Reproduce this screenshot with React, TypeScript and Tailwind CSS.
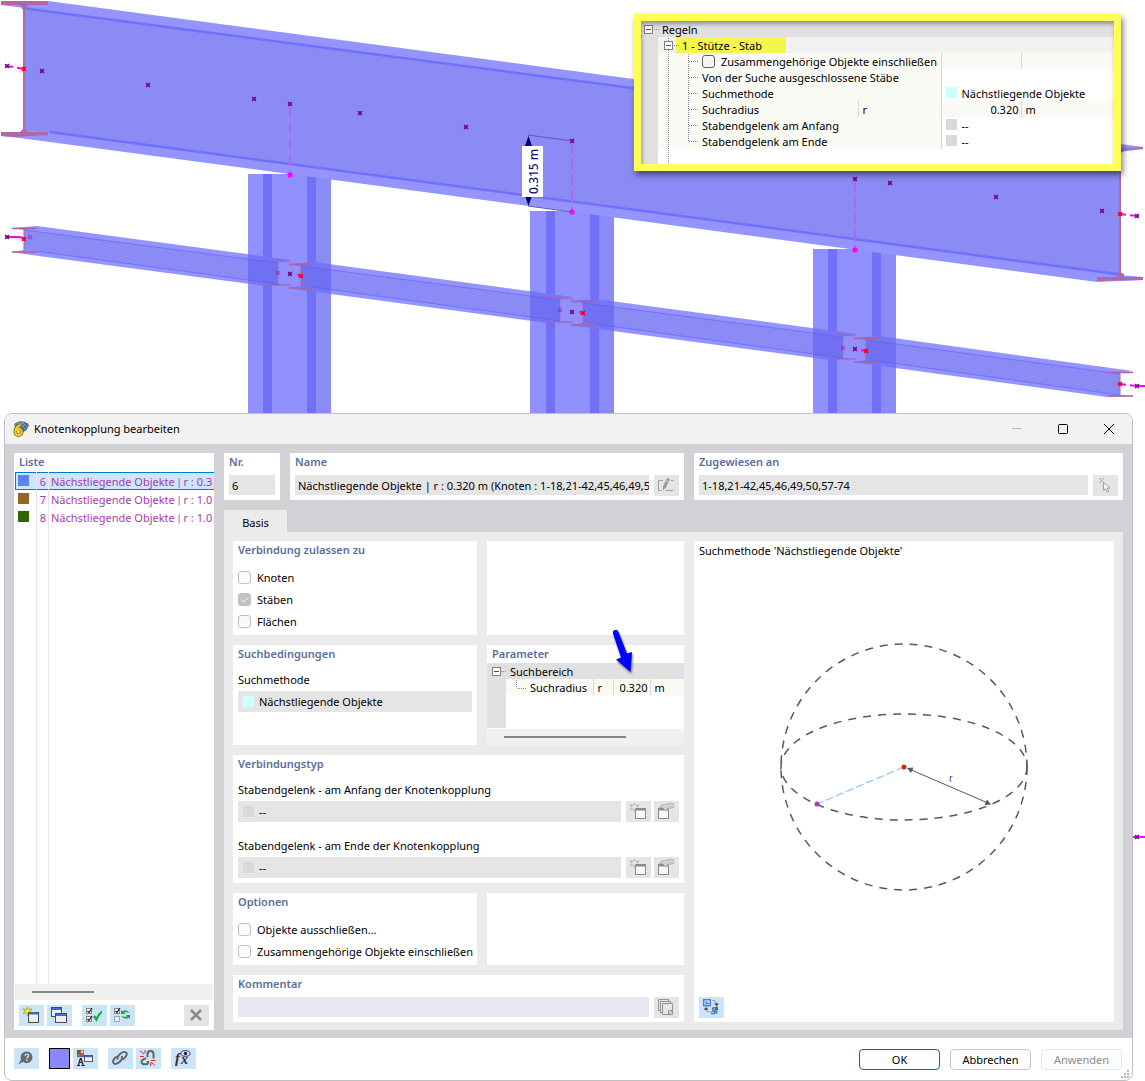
import type { ReactNode } from "react";
import { useState } from "react";

/* ---------- model view behind the dialog ---------- */

const PURLINS = [
  [24, 228, 278, 261],
  [301, 264, 560, 298],
  [583, 301, 843, 335],
  [866, 338, 1120, 372],
];

const COLUMNS = [
  { x: 248, y: 174, w: 83, a: 263, b: 307 },
  { x: 530, y: 211, w: 84, a: 546, b: 590 },
  { x: 813, y: 249, w: 83, a: 828, b: 872 },
];

function purlinPoints([x1, y1, x2, y2]: number[]) {
  return [
    [x1 - 12, y1],
    [x1 + 13, y1 - 2],
    [x2 + 13, y2 - 1],
    [x2, y2 + 1],
    [x2, y2 + 23],
    [x2 + 13, y2 + 24],
    [x2 - 13, y2 + 25],
    [x1, y1 + 26],
    [x1 - 12, y1 + 24],
    [x1, y1 + 22],
    [x1, y1 + 2],
  ]
    .map((p) => p.join(","))
    .join(" ");
}

function PurlinEnd({ x, y, faded }: { x: number; y: number; faded?: boolean }) {
  return (
    <g stroke="#b060a0" opacity={faded ? 0.6 : 1}>
      <path d={`M${x - 12} ${y + 0.5}H${x + 13}M${x - 12} ${y + 24}H${x + 13}`} strokeWidth="1.5" />
      <path d={`M${x} ${y}V${y + 24}`} strokeWidth="1" />
    </g>
  );
}

function Node({ x, y, color = "#7a0080", faded }: { x: number; y: number; color?: string; faded?: boolean }) {
  return (
    <g opacity={faded ? 0.4 : 1}>
      <rect x={x - 2} y={y - 2} width="4" height="4" fill={color} opacity="0.5" />
      <path d={`M${x - 2} ${y - 2}l4 4m0 -4l-4 4`} stroke={color} strokeWidth="1.1" />
    </g>
  );
}

const MEMBER_NODES = [
  [7, 66], [42, 71], [148, 85], [254, 99], [290, 104], [360, 113], [466, 127], [572, 141],
  [855, 179], [890, 183], [996, 197], [1102, 211], [1137, 216], [7, 237], [290, 274],
  [572, 312], [855, 349], [1137, 386], [1137, 837],
];
const HINGE_NODES = [[24, 69], [1120, 214], [24, 239], [301, 276], [583, 313], [866, 351], [1120, 384]];
const FADED_NODES = [[30, 237], [278, 273], [560, 310], [843, 348]];

function ModelView() {
  return (
    <svg className="absolute left-0 top-0 w-full" viewBox="0 0 1145 1081" aria-label="Modellansicht" fill="none">
      <defs>
        <clipPath id="purlin-clip">
          {PURLINS.map((p) => (
            <polygon key={p[0]} points={purlinPoints(p)} />
          ))}
        </clipPath>
      </defs>

      {COLUMNS.map((c) => (
        <g key={c.x}>
          <rect x={c.x} y={c.y} width={c.w} height="260" fill="#9191fd" />
          <rect x={c.b + 9} y={c.y} width={c.x + c.w - c.b - 9} height="260" fill="#8b8bf8" />
          <rect x={c.a} y={c.y} width="9" height="260" fill="#7070f8" />
          <rect x={c.b} y={c.y} width="9" height="260" fill="#7070f8" />
        </g>
      ))}

      <polygon points="48,1 1143,147 1143,149 1120,152 1120,275 1143,277 1143,280 1097,282 12,137 1,136 24,131 24,8 1,5" fill="#9494ff" />
      <polygon points="24,8 1120,152 1120,275 50,132 24,130" fill="#8b8bf6" />
      <path d="M22 8L1120 152M50 132L1124 275" stroke="#7070fc" strokeWidth="2.500" />

      {PURLINS.map((p) => (
        <g key={p[0]}>
          <polygon points={purlinPoints(p)} fill="#9494ff" />
          <polygon points={`${p[0]},${p[1] + 2} ${p[2]},${p[3] + 2} ${p[2]},${p[3] + 23} ${p[0]},${p[1] + 22}`} fill="#8b8bf6" />
          <path d={`M${p[0]} ${p[1] + 2}L${p[2]} ${p[3] + 2}M${p[0] + 12} ${p[1] + 23}L${p[2]} ${p[3] + 23}`} stroke="#7070fc" />
        </g>
      ))}
      <g clipPath="url(#purlin-clip)" fill="#5656ee" fillOpacity="0.5">
        {COLUMNS.map((c) => (
          <rect key={c.x} x={c.x} y="174" width={c.w} height="240" />
        ))}
      </g>
      {PURLINS.map((p, i) => (
        <g key={p[0]}>
          <PurlinEnd x={p[0]} y={p[1]} />
          <PurlinEnd x={p[2]} y={p[3]} faded={i < 3} />
        </g>
      ))}

      <path d="M1 1H48V5H28L25 8V129L28 132H48V135L14 137L1 136V132H20L23 129V8L20 5H1Z" fill="#b266a5" />
      <path d="M1121 149L1143 147V149L1124 150L1121 153V272L1124 277H1143V280L1097 281V277H1116L1119 272V152Z" fill="#b266a5" />

      <path d="M290 106V173M572 143V210M855 181V248" stroke="#ae66f4" strokeWidth="2" strokeDasharray="12 4" />
      <path
        d="M7 66L24 69M1120 214L1137 216M1120 384L1137 386M297 275L301 276M579 312L583 313M861 350L866 351"
        stroke="#ff00ff"
        strokeWidth="2"
        strokeDasharray="6 4"
      />
      <path d="M7 237H20L24 239M1137 386H1145M1132 837H1145" stroke="#ff00ff" strokeWidth="2" />
      {[[290, 175], [572, 212], [855, 250]].map(([x, y]) => (
        <rect key={x} x={x - 2.5} y={y - 2.5} width="5" height="5" rx="1.5" fill="#ff00ff" />
      ))}
      {MEMBER_NODES.map(([x, y]) => <Node key={`${x}-${y}`} x={x} y={y} />)}
      {HINGE_NODES.map(([x, y]) => <Node key={`${x}-${y}`} x={x} y={y} color="#ff0000" />)}
      {FADED_NODES.map(([x, y]) => <Node key={`${x}-${y}`} x={x} y={y} color="#a00060" faded />)}

      <path d="M528 135L572 141M528 206L572 212" stroke="#5a5ab8" />
      <path d="M528.500 136L532 146H525ZM528.500 206L532 196H525Z" fill="#000080" />
      <rect x="522" y="146" width="21" height="51" fill="#fff" />
      <text x="0" y="0" transform="translate(538 194) rotate(-90)" fill="#101070" fontSize="12" fontWeight="500" fontFamily="Noto Sans, sans-serif">
        0.315 m
      </text>
    </svg>
  );
}

/* ---------- icons ---------- */

const svgBox = "h-4 w-4";

function NewWindowIcon({ muted }: { muted?: boolean }) {
  return (
    <svg viewBox="0 0 16 16" className={svgBox} fill="none">
      <path d="M4.500 0L5.600 2.600L9 2L7 4.200L9 6.500L6 6L4.800 9L3.500 6L0 6.500L2.200 4.200L0 2L3.400 2.600Z" fill={muted ? "#ececec" : "#fff000"} stroke={muted ? "#a0a0a0" : "#8f8f2a"} strokeWidth=".7" />
      <rect x="5.500" y="5.500" width="10" height="10" fill={muted ? "#fafafa" : "#eeeef2"} stroke={muted ? "#8c8c8c" : "#4a4a4a"} />
      <path d="M6 6.500H15" stroke={muted ? "#8c8c8c" : "#4468d8"} strokeWidth="2" />
    </svg>
  );
}
function CopyWindowIcon() {
  return (
    <svg viewBox="0 0 16 16" className={svgBox} fill="#eeeef2" stroke="#4a4a4a">
      <rect x=".5" y=".5" width="10" height="9" />
      <path d="M1 2H10" stroke="#4468d8" strokeWidth="2" />
      <rect x="4.500" y="6.500" width="11" height="9" />
      <path d="M5 8H15" stroke="#4468d8" strokeWidth="2" />
    </svg>
  );
}
function CheckListIcon({ swap }: { swap?: boolean }) {
  return (
    <svg viewBox="0 0 16 16" className={svgBox} fill="none">
      <rect x=".5" y="1.500" width="5" height="5" fill="#fff" stroke="#888" />
      <rect x=".5" y="9.500" width="5" height="5" fill={swap ? "#e4f0fa" : "#fff"} stroke={swap ? "#9aa8b4" : "#888"} />
      <path d="M1.500 4l1.500 1.500L6 1" stroke="#222" strokeWidth="1.200" />
      {!swap && <path d="M1.500 12l1.500 1.500L6 9" stroke="#222" strokeWidth="1.200" />}
      {swap ? (
        <g fill="#2fa04a">
          <path d="M7 7V3L8.300 4.200C10.500 2.500 14 3 15.500 6C13.500 5 11.500 5 10 5.800L11.200 7Z" />
          <path d="M16 8V12L14.700 10.800C12.500 12.500 9 12 7.500 9C9.500 10 11.500 10 13 9.200L11.800 8Z" />
        </g>
      ) : (
        <path d="M8 9L10.500 12.500C11.500 9.500 13 7 16 4.500" stroke="#10a848" strokeWidth="2.200" />
      )}
    </svg>
  );
}
function CrossIcon() {
  return (
    <svg viewBox="0 0 16 16" className={svgBox}>
      <path d="M3 3L13 13M13 3L3 13" stroke="#8a8a8a" strokeWidth="2.600" />
    </svg>
  );
}
function EditIcon() {
  return (
    <svg viewBox="0 0 16 16" className={svgBox} fill="none">
      <path d="M5 3.500H.5V13.500H3.500M8 13.500H15.500M13 3.500H15.500" stroke="#a0a0a0" />
      <path d="M9 1L12 2.200L8 10.500L5 13.500V9.500Z" fill="#9c9c9c" />
      <path d="M8 3.500L11 4.800" stroke="#e5e5e5" strokeWidth=".7" />
    </svg>
  );
}
function PickIcon() {
  return (
    <svg viewBox="0 0 16 16" className={svgBox} fill="none">
      <path d="M2 1l5 5M7 1L2 6" stroke="#a0a0a0" />
      <path d="M6.500 5.500v8l2-1.800 1.500 3.300 1.800-.8-1.500-3.200H13z" fill="#f4f4f4" stroke="#9a9a9a" strokeWidth=".9" />
    </svg>
  );
}
function EditWindowIcon() {
  return (
    <svg viewBox="0 0 16 16" className={svgBox} fill="none">
      <rect x=".5" y="5.500" width="10" height="10" fill="#fafafa" stroke="#8c8c8c" />
      <path d="M1 6.500H10" stroke="#8c8c8c" strokeWidth="2" />
      <path d="M1 4.500C3 1.500 6 1.500 8 1.200L11 0.500H15.500V5H12.500L9.500 5.500L8 8.500L6 6L4 4.500Z" fill="#c6c6c6" stroke="#a8a8a8" strokeWidth=".6" />
      <path d="M5 3.500L9 3M7 6L8 4.500M11 1.500V4.500M13 2.500H15" stroke="#ededed" />
    </svg>
  );
}
function PagesIcon() {
  return (
    <svg viewBox="0 0 16 16" className={svgBox} fill="#e6e6e6" stroke="#959595">
      <rect x=".5" y=".5" width="10" height="11" />
      <rect x="2.500" y="2.500" width="10" height="11" />
      <path d="M4.500 4.500H14.500V15.500H4.500zM10.500 15V11.500H14" />
      <path d="M11 15L14.500 11.500" />
    </svg>
  );
}
function ViewSwapIcon() {
  return (
    <svg viewBox="0 0 16 16" className={svgBox} fill="none">
      <rect x=".7" y=".7" width="6.600" height="6" fill="#d8e6ff" stroke="#4a78e8" strokeWidth="1.400" />
      <path d="M2.500 2.500V5.200H6V3.800H4.200V2.500Z" fill="#4a78e8" />
      <path d="M9.500 1.500C12 1.500 13.500 2.500 13.500 5M3 9.500C3 12 4 13 6.500 13" stroke="#8a8a8a" />
      <path d="M11 4.500H16L13.500 7.200ZM.5 10.800H5.500L3 8Z" fill="#484848" />
      <path d="M9 8.500L15 7.500V11L9 12Z" fill="#4468a8" />
      <path d="M7.500 12L14.500 11V14.500L8.500 15.800Z" fill="#5c80c0" />
      <path d="M9.500 10.500L12 9.500M8 12.500L11 14" stroke="#b8cce8" />
    </svg>
  );
}
function HelpIcon() {
  return (
    <svg viewBox="0 0 16 16" className={svgBox}>
      <path d="M8.500 1.500a5.800 5.800 0 1 1-3.500 10.300L.5 14.500L3 9.500A5.800 5.800 0 0 1 8.500 1.500z" fill="#66696e" />
      <path d="M7 5.800c.2-2.300 3.800-2.100 3.600 0-.1 1.200-1.700 1.300-1.700 2.700" fill="none" stroke="#cce4f7" strokeWidth="1.400" />
      <rect x="8.100" y="9.500" width="1.500" height="1.500" fill="#cce4f7" />
    </svg>
  );
}
function DisplayIcon() {
  return (
    <svg viewBox="0 0 16 16" className={svgBox} fill="none">
      <rect x="0" y="0" width="7" height="7" fill="#555" />
      <rect x=".5" y=".5" width="2.800" height="2.800" fill="#f02020" />
      <rect x="3.700" y=".5" width="2.800" height="2.800" fill="#f4e020" />
      <rect x=".5" y="3.700" width="2.800" height="2.800" fill="#20c030" />
      <rect x="3.700" y="3.700" width="2.800" height="2.800" fill="#f020f0" />
      <path d="M3.500 8L1.500 15M4 8L6 15M2 12.500H6M0 15.500H3M4.500 15.500H8" stroke="#222" strokeWidth="1.200" />
      <rect x="7.500" y="5.500" width="8" height="6" fill="#f4f4f4" stroke="#555" />
      <path d="M8 6.500H15" stroke="#4468d8" strokeWidth="1.500" />
    </svg>
  );
}
function LinkIcon({ broken }: { broken?: boolean }) {
  return broken ? (
    <svg viewBox="0 0 16 16" className={svgBox} fill="none">
      <path d="M7.500 7V4a3 3 0 0 1 6 0V8.500M6 8L3.500 9.500a2.400 2.400 0 0 0 1 4.800H6a2 2 0 0 0 2-2V11" stroke="#606468" strokeWidth="2" />
      <path d="M0 1L4 4M5 0V3.500M0 6.500H4M11 10.500H15.500M11 12L15 15.500M10.500 12.500V16" stroke="#ff2020" />
    </svg>
  ) : (
    <svg viewBox="0 0 16 16" className={svgBox} fill="none" stroke="#606468" strokeWidth="1.900">
      <path d="M6 9.500C4.500 7.500 6 6 7.500 4.500S12 1 14 2.500S14 6.500 12 8.500L10.500 9.500" />
      <path d="M9.500 6C11 8 10 9.500 8.500 11S4 15 2 13.500S1.500 9.500 3.500 7.500L5 6.500" />
    </svg>
  );
}
function FormulaIcon() {
  return (
    <svg viewBox="0 0 16 16" className={svgBox}>
      <text x="0" y="13" fontFamily="Liberation Serif, serif" fontStyle="italic" fontWeight="700" fontSize="15" fill="#333">f</text>
      <text x="6" y="14" fontFamily="Liberation Serif, serif" fontStyle="italic" fontWeight="700" fontSize="14" fill="#333">x</text>
      <ellipse cx="10.500" cy="3.500" rx="4.500" ry="2.800" fill="#e8e8f8" stroke="#30306a" />
      <circle cx="10.500" cy="3.500" r="1.800" fill="#202070" />
    </svg>
  );
}
function AppIcon() {
  return (
    <svg viewBox="0 0 16 16" className={svgBox} fill="none">
      <path d="M1 4C4-1 12-1 16 4L13.500 9L9 12L4 7z" fill="#44688e" />
      <path d="M2 4c4-3 8-2 10 5M5 2c4-1 8 1 9 5M4 6l7-5M7 7l6-4" stroke="#8fb2d2" strokeWidth=".7" />
      <path d="M7.500 4C4 5 2.300 7.500 2.300 11a3.200 3.200 0 1 0 3.200-3.200" stroke="#7a6410" strokeWidth="3.600" />
      <path d="M7.500 4C4.500 5 2.300 7.500 2.300 11a3.200 3.200 0 1 0 3.200-3.200c-1.600 0-2.600.8-3 2" stroke="#f8c820" strokeWidth="2.200" />
    </svg>
  );
}

/* ---------- small building blocks ---------- */

type Tone = "blue" | "gray";

function IconButton({ label, tone = "gray", children }: { label: string; tone?: Tone; children: ReactNode }) {
  return (
    <button
      type="button"
      aria-label={label}
      className={`flex h-[21px] w-[25px] shrink-0 items-start pl-1 pt-[2px] ${tone === "blue" ? "bg-[#cce4f7]" : "bg-[#e5e5e5]"}`}
    >
      {children}
    </button>
  );
}

function Panel({ title, className = "", children }: { title?: string; className?: string; children?: ReactNode }) {
  return (
    <section className={`relative bg-white ${className}`}>
      {title && <h2 className="h-[18px] px-[5px] font-semibold leading-[18px] text-[#5a6e9a]">{title}</h2>}
      {children}
    </section>
  );
}

function Check({ label, defaultChecked }: { label: string; defaultChecked?: boolean }) {
  return (
    <label className="flex h-[22px] items-start gap-[6px] whitespace-nowrap px-[5px] pt-1 leading-[14px]">
      <span className="relative h-[13px] w-[13px] shrink-0">
        <input
          type="checkbox"
          defaultChecked={defaultChecked}
          className="peer block h-[13px] w-[13px] appearance-none rounded-[3px] border border-[#c0c0c0] bg-[#fafafa] checked:bg-[#c2c2c2]"
        />
        <svg viewBox="0 0 13 13" className="pointer-events-none absolute inset-0 hidden peer-checked:block" fill="none">
          <path d="M3 6.500L5.500 9L10 4.500" stroke="#fff" />
        </svg>
      </span>
      {label}
    </label>
  );
}

function Dropdown({ label, value, swatch }: { label: string; value: string; swatch: string }) {
  return (
    <div className="relative min-w-0 flex-1">
      <select
        aria-label={label}
        className="block h-[21px] w-full appearance-none bg-[#e5e5e5] pl-[21px] leading-[21px] text-black"
      >
        <option>{value}</option>
      </select>
      <span className={`pointer-events-none absolute left-[5px] top-[5px] h-[11px] w-[11px] ${swatch}`} />
    </div>
  );
}

function HingeField({ label }: { label: string }) {
  return (
    <div>
      <div className="h-[22px] leading-[22px]">{label}</div>
      <div className="flex">
        <Dropdown label={label} value="--" swatch="bg-[#d9d9d9]" />
        <div className="ml-[5px] flex gap-[3px]">
          <IconButton label="Neu"><NewWindowIcon muted /></IconButton>
          <IconButton label="Bearbeiten"><EditWindowIcon /></IconButton>
        </div>
      </div>
    </div>
  );
}

function Expander({ className }: { className: string }) {
  return (
    <button type="button" aria-label="Zuklappen" className={`absolute h-[9px] w-[9px] border border-[#808080] bg-white ${className}`}>
      <span className="absolute left-px top-[3px] h-px w-[5px] bg-[#505050]" />
    </button>
  );
}

/* ---------- rules call-out ---------- */

const RULES = [
  { label: "Von der Suche ausgeschlossene Stäbe" },
  { label: "Suchmethode", swatch: "bg-[#ccffff]", value: "Nächstliegende Objekte" },
  { label: "Suchradius", symbol: "r", number: "0.320", unit: "m" },
  { label: "Stabendgelenk am Anfang", swatch: "bg-[#d9d9d9]", value: "--" },
  { label: "Stabendgelenk am Ende", swatch: "bg-[#d9d9d9]", value: "--" },
];

function RulesCallout() {
  return (
    <aside className="absolute right-6 top-[14px] w-[487px] border-[7px] border-[#ffff57] bg-white shadow-[2px_4px_6px_rgba(0,0,0,0.5)]">
      <div className="relative border-l-[17px] border-[#e0e0e0] pb-[15px]">
        <table className="w-full table-fixed border-collapse leading-[14px]">
          <colgroup>
            <col className="w-[200px]" />
            <col className="w-[83px]" />
            <col className="w-20" />
            <col />
          </colgroup>
          <tbody>
            <tr className="h-4 bg-[#e0e0e0]">
              <th colSpan={4} className="p-0 pl-1 pt-[2px] text-left font-normal">Regeln</th>
            </tr>
            <tr className="h-4 bg-[#f2f2f2]">
              <th colSpan={4} className="p-0 pl-[18px] text-left font-normal">
                <span className="block w-[110px] bg-[#f5f550] pl-[6px] pt-[2px]">1 - Stütze - Stab</span>
              </th>
            </tr>
            <tr className="h-4 bg-[#fafaf5]">
              <td colSpan={2} className="p-0 pl-11">
                <label className="flex h-4 items-start gap-[6px] whitespace-nowrap pt-[2px]">
                  <input type="checkbox" className="h-[13px] w-[13px] appearance-none rounded-[3px] border border-[#606060] bg-[#f5f5f5]" />
                  Zusammengehörige Objekte einschließen
                </label>
              </td>
              <td className="border-x border-[#d9d9d9] p-0" />
              <td className="p-0" />
            </tr>
            {RULES.map((r) => (
              <tr key={r.label} className={r.number ? "h-4 bg-[#fafaf5]" : "h-4"}>
                <td colSpan={r.symbol ? 1 : 2} className="whitespace-nowrap bg-[#fafaf5] p-0 pl-11 pt-[2px]">{r.label}</td>
                {r.symbol && <td className="border-l border-[#d9d9d9] p-0 pl-1 pt-[2px]">{r.symbol}</td>}
                {r.number ? (
                  <>
                    <td className="border-x border-[#d9d9d9] p-0 pr-[2px] pt-[2px] text-right">{r.number}</td>
                    <td className="p-0 pl-1 pt-[2px]">{r.unit}</td>
                  </>
                ) : (
                  <td colSpan={2} className="border-l border-[#d9d9d9] p-0 pl-1">
                    {r.value && (
                      <span className="flex items-start gap-[5px]">
                        <span className={`mt-[2px] h-[11px] w-[11px] ${r.swatch}`} />
                        <span className="pt-[2px]">{r.value}</span>
                      </span>
                    )}
                  </td>
                )}
              </tr>
            ))}
          </tbody>
        </table>
        <svg className="pointer-events-none absolute -left-[17px] top-0 h-full w-[70px]" fill="none" stroke="#909090" strokeDasharray="1 1">
          <path d="M13 8.500H18M27.500 17V143M33 24.500H38M47.500 33V120.500M48 40.500H58M48 56.500H58M48 72.500H58M48 88.500H58M48 104.500H58M48 120.500H58" />
        </svg>
        <Expander className="-left-[14px] top-1" />
        <Expander className="left-[6px] top-5" />
      </div>
      <div className="pointer-events-none absolute inset-0 shadow-[inset_1px_3px_4px_rgba(0,0,0,0.35)]" />
    </aside>
  );
}

/* ---------- dialog parts ---------- */

const ITEMS = [
  { nr: 6, name: "Nächstliegende Objekte", radius: "r : 0.3", color: "bg-[#6080f5]" },
  { nr: 7, name: "Nächstliegende Objekte", radius: "r : 1.0", color: "bg-[#966428]" },
  { nr: 8, name: "Nächstliegende Objekte", radius: "r : 1.0", color: "bg-[#326400]" },
];

function ListPanel() {
  const [active, setActive] = useState(6);
  return (
    <Panel title="Liste" className="flex w-[200px] shrink-0 flex-col">
      <div className="relative ml-px flex-1 pt-px">
        <ul>
          {ITEMS.map((item) => (
            <li key={item.nr}>
              <button
                type="button"
                onClick={() => setActive(item.nr)}
                className={`flex h-[18px] w-full items-start whitespace-nowrap border-y border-l leading-[14px] text-[#a83ca8] ${
                  item.nr === active ? "border-[#0078d4] bg-[#cce6ff]" : "border-transparent"
                }`}
              >
                <span className={`ml-[2px] mt-[2px] h-[11px] w-[11px] shrink-0 ${item.color}`} />
                <span className="w-[19px] shrink-0 pr-[2px] pt-[2px] text-right">{item.nr}</span>
                <span className="pl-[3px] pt-[2px]">
                  {item.name}
                  <span className="px-[3px] font-['Roboto',sans-serif]">|</span>
                  {item.radius}
                </span>
              </button>
            </li>
          ))}
        </ul>
        <span className="pointer-events-none absolute bottom-0 left-[21px] top-px w-[13px] border-x border-[#e8e8e8]" />
      </div>
      <div className="mx-px h-4 bg-[#f0f0f0] pl-[17px] pt-[7px]">
        <div className="h-[2px] w-[62px] bg-[#868686]" />
      </div>
      <div className="flex px-[5px] pb-1 pt-[5px]">
        <div className="flex gap-[3px]">
          <IconButton label="Neu" tone="blue"><NewWindowIcon /></IconButton>
          <IconButton label="Kopieren" tone="blue"><CopyWindowIcon /></IconButton>
        </div>
        <div className="ml-[10px] flex gap-[3px]">
          <IconButton label="Alle auswählen" tone="blue"><CheckListIcon /></IconButton>
          <IconButton label="Auswahl umkehren" tone="blue"><CheckListIcon swap /></IconButton>
        </div>
        <div className="ml-auto">
          <IconButton label="Löschen"><CrossIcon /></IconButton>
        </div>
      </div>
    </Panel>
  );
}

const fieldClass = "block h-5 min-w-0 flex-1 bg-[#e5e5e5] pl-[3px] text-black";

function HeaderFields() {
  return (
    <div className="flex gap-[10px]">
      <Panel title="Nr." className="h-[47px] w-14 shrink-0">
        <div className="flex px-[5px] pt-1">
          <input aria-label="Nr." readOnly value="6" className={fieldClass} />
        </div>
      </Panel>
      <Panel title="Name" className="h-[47px] w-[394px] shrink-0">
        <div className="flex gap-[5px] px-[5px] pt-1">
          <input aria-label="Name" readOnly value="Nächstliegende Objekte | r : 0.320 m (Knoten : 1-18,21-42,45,46,49,50" className={fieldClass} />
          <IconButton label="Name bearbeiten"><EditIcon /></IconButton>
        </div>
      </Panel>
      <Panel title="Zugewiesen an" className="h-[47px] min-w-0 flex-1">
        <div className="flex gap-[5px] px-[5px] pt-1">
          <input aria-label="Zugewiesen an" readOnly value="1-18,21-42,45,46,49,50,57-74" className={fieldClass} />
          <IconButton label="Auswählen"><PickIcon /></IconButton>
        </div>
      </Panel>
    </div>
  );
}

function ParameterPanel() {
  return (
    <Panel title="Parameter" className="flex h-[100px] flex-1 flex-col">
      <div className="relative flex-1 border-l-[19px] border-[#e0e0e0]">
        <table className="w-full table-fixed border-collapse leading-[14px]">
          <colgroup>
            <col className="w-[87px]" />
            <col className="w-5" />
            <col className="w-[37px]" />
            <col />
          </colgroup>
          <tbody>
            <tr className="h-4 bg-[#e0e0e0]">
              <th colSpan={4} className="p-0 pl-1 pt-[2px] text-left font-normal">Suchbereich</th>
            </tr>
            <tr className="h-4 bg-[#fafaf5]">
              <td className="p-0 pl-6 pt-[2px]">Suchradius</td>
              <td className="border-l border-[#d9d9d9] p-0 pl-1 pt-[2px]">r</td>
              <td className="border-x border-[#d9d9d9] p-0 pr-[2px] pt-[2px] text-right">0.320</td>
              <td className="p-0 pl-1 pt-[2px]">m</td>
            </tr>
          </tbody>
        </table>
        <svg className="pointer-events-none absolute -left-[19px] top-0 h-8 w-[42px]" fill="none" stroke="#909090" strokeDasharray="1 1">
          <path d="M14 8.500H20M29.500 17V25M30 25.500H40" />
        </svg>
        <Expander className="-left-[14px] top-1" />
      </div>
      <div className="mt-px h-4 bg-[#f0f0f0] pl-[17px] pt-[7px]">
        <div className="h-[2px] w-[122px] bg-[#868686]" />
      </div>
      <svg className="pointer-events-none absolute -top-4 left-[124px] h-12 w-7 drop-shadow-[1px_2px_1px_rgba(0,0,0,0.5)]" viewBox="0 0 28 48">
        <path d="M2 4.500A2.500 2.500 0 0 1 7.500 3L16 24.500L21 23L19.500 43L5 30.500L10 28.500Z" fill="#0000ff" />
      </svg>
    </Panel>
  );
}

function Preview() {
  return (
    <Panel className="flex min-w-0 flex-1 flex-col">
      <p className="h-5 px-[5px] leading-5">Suchmethode 'Nächstliegende Objekte'</p>
      <div className="flex flex-1 items-start justify-center pt-20">
        <svg viewBox="0 0 252 252" className="h-[252px] w-[252px]" fill="none">
          <g stroke="#56566e" strokeWidth="1.500" strokeDasharray="8 7">
            <circle cx="126" cy="126" r="123" />
            <ellipse cx="126" cy="126" rx="123" ry="53" />
          </g>
          <path d="M126 126L39 163" stroke="#a8ccf4" strokeWidth="1.500" strokeDasharray="8 3" />
          <path d="M131 128L210 162" stroke="#56566e" />
          <path d="M129 127l6.500-.5-2.500 5.500zM213 163.500l-6.500.5 2.500-5.500z" fill="#56566e" />
          <circle cx="126" cy="126" r="2.500" fill="#c83200" />
          <circle cx="39" cy="163" r="2.500" fill="#aa32c8" />
          <text x="171" y="141" fontSize="11" fill="#56566e" fontFamily="Liberation Sans, sans-serif">r</text>
        </svg>
      </div>
      <div className="px-[5px] pb-1">
        <IconButton label="Darstellung wechseln" tone="blue"><ViewSwapIcon /></IconButton>
      </div>
    </Panel>
  );
}

function BasisTab() {
  return (
    <div className="flex flex-1 gap-[10px] bg-[#ebebeb] px-[9px] pb-2 pt-[9px]">
      <div className="flex w-[451px] shrink-0 flex-col gap-[10px]">
        <div className="flex gap-[10px]">
          <Panel title="Verbindung zulassen zu" className="h-[94px] w-[244px]">
            <div className="pt-2">
              <Check label="Knoten" />
              <Check label="Stäben" defaultChecked />
              <Check label="Flächen" />
            </div>
          </Panel>
          <Panel className="flex-1" />
        </div>
        <div className="flex gap-[10px]">
          <Panel title="Suchbedingungen" className="h-[100px] w-[244px]">
            <div className="px-[5px] pt-[6px]">
              <div className="h-[22px] leading-[22px]">Suchmethode</div>
              <Dropdown label="Suchmethode" value="Nächstliegende Objekte" swatch="bg-[#ccffff]" />
            </div>
          </Panel>
          <ParameterPanel />
        </div>
        <Panel title="Verbindungstyp" className="pb-[5px]">
          <div className="flex flex-col gap-[13px] px-[5px] pt-[6px]">
            <HingeField label="Stabendgelenk - am Anfang der Knotenkopplung" />
            <HingeField label="Stabendgelenk - am Ende der Knotenkopplung" />
          </div>
        </Panel>
        <div className="flex gap-[10px]">
          <Panel title="Optionen" className="h-[72px] w-[244px]">
            <div className="pt-2">
              <Check label="Objekte ausschließen..." />
              <Check label="Zusammengehörige Objekte einschließen" />
            </div>
          </Panel>
          <Panel className="flex-1" />
        </div>
        <Panel title="Kommentar" className="h-[47px]">
          <div className="flex gap-[5px] px-[5px] pt-1">
            <input aria-label="Kommentar" className="block h-5 min-w-0 flex-1 bg-[#e7e7f2] px-1" />
            <IconButton label="Kommentar auswählen"><PagesIcon /></IconButton>
          </div>
        </Panel>
      </div>
      <Preview />
    </div>
  );
}

function Footer() {
  const base = "h-[21px] w-[81px] rounded-[4px] border bg-[#fdfdfd] leading-[19px]";
  return (
    <footer className="relative flex h-[42px] items-start px-[9px] pt-[10px]">
      <div className="flex">
        <IconButton label="Hilfe" tone="blue"><HelpIcon /></IconButton>
        <button type="button" aria-label="Farbe" className="ml-[10px] h-[21px] w-[21px] border border-black bg-[#8888ff]" />
        <div className="ml-[3px]"><IconButton label="Anzeigeeigenschaften" tone="blue"><DisplayIcon /></IconButton></div>
        <div className="ml-[10px] flex gap-[3px]">
          <IconButton label="Verknüpfen" tone="blue"><LinkIcon /></IconButton>
          <IconButton label="Verknüpfung lösen" tone="blue"><LinkIcon broken /></IconButton>
        </div>
        <div className="ml-[10px]"><IconButton label="Formel" tone="blue"><FormulaIcon /></IconButton></div>
      </div>
      <div className="ml-auto flex gap-[10px] pr-px pt-px">
        <button type="button" className={`${base} border-[#0067c0]`}>OK</button>
        <button type="button" className={`${base} border-[#c8c8c8]`}>Abbrechen</button>
        <button type="button" disabled className={`${base} border-[#e6e6e6] text-[#8c8c8c]`}>Anwenden</button>
      </div>
      <svg viewBox="0 0 8 8" className="absolute bottom-[2px] right-[3px] h-2 w-2" fill="#b8b8b8">
        <path d="M6 0h2v2H6zM3 3h2v2H3zM6 3h2v2H6zM0 6h2v2H0zM3 6h2v2H3zM6 6h2v2H6z" />
      </svg>
    </footer>
  );
}

function Dialog() {
  return (
    <div role="dialog" aria-label="Knotenkopplung bearbeiten" className="relative ml-1 mr-3 mt-[413px] overflow-hidden rounded-lg border border-[#c0c0c4] bg-white">
      <header className="flex h-[30px] items-center bg-[#f2f2f2] pl-2">
        <AppIcon />
        <h1 className="pl-[5px] font-normal">Knotenkopplung bearbeiten</h1>
        <div className="ml-auto flex">
          <button type="button" aria-label="Minimieren" className="flex h-[30px] w-[46px] items-center justify-center">
            <svg viewBox="0 0 12 12" className="h-3 w-3" stroke="#b8b8b8"><path d="M1 5.500H11" /></svg>
          </button>
          <button type="button" aria-label="Maximieren" className="flex h-[30px] w-[46px] items-center justify-center">
            <svg viewBox="0 0 12 12" className="h-3 w-3" stroke="#000" fill="none"><rect x="1.500" y="1.500" width="9" height="9" rx="1" /></svg>
          </button>
          <button type="button" aria-label="Schließen" className="flex h-[30px] w-[46px] items-center justify-center">
            <svg viewBox="0 0 12 12" className="h-3 w-3" stroke="#000"><path d="M1 1L11 11M11 1L1 11" /></svg>
          </button>
        </div>
      </header>
      <div className="flex gap-[10px] bg-[#d1d1d6] px-[9px] pb-2 pt-[9px]">
        <ListPanel />
        <div className="flex min-w-0 flex-1 flex-col">
          <HeaderFields />
          <div role="tablist" className="mt-[10px] flex">
            <button type="button" role="tab" aria-selected="true" className="h-[22px] w-[63px] bg-[#ebebeb] pt-1">Basis</button>
          </div>
          <BasisTab />
        </div>
      </div>
      <Footer />
    </div>
  );
}

export default function App() {
  return (
    <main className="relative flow-root min-h-screen overflow-hidden bg-white font-['Noto_Sans',sans-serif] text-[11px] text-black">
      <ModelView />
      <RulesCallout />
      <Dialog />
    </main>
  );
}
